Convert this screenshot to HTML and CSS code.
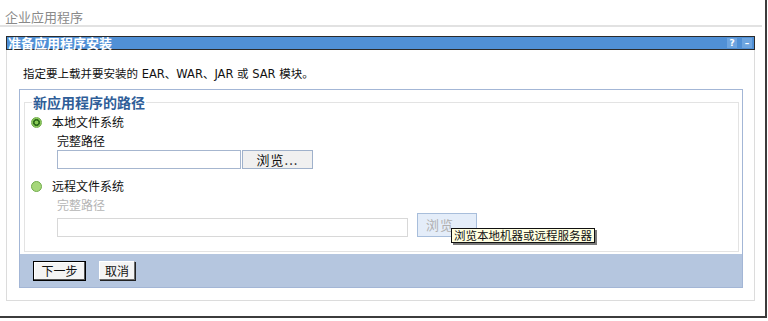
FILE: index.html
```html
<!DOCTYPE html>
<html>
<head>
<meta charset="utf-8">
<link rel="stylesheet" href="styles.css">
</head>
<body>
<div class="page">
  <div class="page-title">企业应用程序</div>
  <div class="frame">
    <div class="titlebar">
      <span class="titlebar-text">准备应用程序安装</span>
      <span class="tools"><span class="tool">?</span><span class="tool">–</span></span>
    </div>
    <p class="desc">指定要上载并要安装的 EAR、WAR、JAR 或 SAR 模块。</p>
    <div class="panel">
      <fieldset class="group">
        <legend>新应用程序的路径</legend>
        <div class="radio-row"><span class="radio checked"></span>本地文件系统</div>
        <div class="field-label">完整路径</div>
        <div class="field-row"><span class="input"></span><span class="btn browse">浏览...</span></div>
        <div class="radio-row second"><span class="radio"></span>远程文件系统</div>
        <div class="field-label disabled">完整路径</div>
        <div class="field-row remote"><span class="input wide"></span><span class="btn browse off">浏览...<span class="tooltip">浏览本地机器或远程服务器</span></span></div>
      </fieldset>
      <div class="buttonbar"><span class="btn action default">下一步</span><span class="btn action">取消</span></div>
    </div>
  </div>
</div>
</body>
</html>
```

FILE: styles.css
```css
html, body {
  margin: 0;
  padding: 0;
  background: #fff;
}
body {
  font-family: "Noto Sans CJK SC", "DejaVu Sans", sans-serif;
  font-size: 12px;
  color: #111;
  width: 768px;
  height: 321px;
  overflow: hidden;
}
.page {
  width: 765px;
  height: 316px;
  border-right: 2px solid #3c3c3c;
  border-bottom: 2px solid #3c3c3c;
  display: flex;
  flex-direction: column;
}
.page-title {
  padding: 9px 0 0 5px;
  height: 16px;
  line-height: 16px;
  font-size: 13px;
  color: #8a8a8a;
  border-bottom: 2px solid #e2e2e2;
  margin-right: 3px;
}
.frame {
  margin: 9px 10px 0 6px;
  height: 264px;
  border: 1px solid #dcdcdc;
  border-top: none;
  display: flex;
  flex-direction: column;
}
.titlebar {
  height: 12px;
  border: 1px solid #2b2b2b;
  background: #5090d6;
  display: flex;
  align-items: center;
  justify-content: space-between;
  margin: 0 -1px;
}
.titlebar-text {
  color: #fff;
  font-weight: bold;
  font-size: 13px;
  line-height: 12px;
  padding-left: 1px;
}
.tools {
  display: flex;
  gap: 5px;
  padding-right: 2px;
}
.tool {
  width: 10px;
  height: 10px;
  background: #6ea5e0;
  color: #fff;
  font-family: "DejaVu Sans", sans-serif;
  font-weight: bold;
  font-size: 9px;
  line-height: 10px;
  text-align: center;
}
.desc {
  margin: 16px 0 7px 0;
  padding-left: 16px;
  line-height: 16px;
  font-family: "DejaVu Sans", "Noto Sans CJK SC", sans-serif;
  font-size: 11.5px;
}
.panel {
  margin: 0 11px 0 12px;
  border: 1px solid #a3b6d6;
  display: flex;
  flex-direction: column;
}
.group {
  margin: 4px 3px 2px 4px;
  padding: 0 0 14px 7px;
  border: 1px solid #e3e3e3;
}
.group legend {
  padding: 0 1px;
  font-size: 14px;
  font-weight: bold;
  line-height: 16px;
  color: #2f5e98;
}
.radio-row {
  display: flex;
  align-items: center;
  margin-top: 4px;
  margin-left: -1px;
  line-height: 16px;
}
.radio-row.second {
  margin-top: 9px;
}
.radio {
  width: 11px;
  height: 11px;
  border-radius: 50%;
  margin-right: 10px;
  box-sizing: border-box;
  border: 1px solid #72ad4c;
  background: #a6d77a;
}
.radio.checked {
  background: radial-gradient(circle, #8acb55 0 1.6px, #2f6f1c 2.2px 3.2px, #8cc95c 3.8px);
}
.field-label {
  margin-top: 3px;
  padding-left: 25px;
  line-height: 16px;
}
.field-label.disabled {
  color: #b5b5b5;
}
.field-row {
  display: flex;
  align-items: flex-end;
  margin-top: 1px;
  padding-left: 25px;
}
.field-row.remote {
  margin-top: 0;
  gap: 9px;
}
.input {
  width: 184px;
  height: 19px;
  box-sizing: border-box;
  border: 1px solid #a6b6cf;
  background: #fff;
}
.input.wide {
  width: 351px;
  border-color: #d8d8d8;
}
.btn {
  display: flex;
  align-items: center;
  justify-content: center;
  box-sizing: border-box;
  line-height: 14px;
}
.browse {
  width: 71px;
  height: 19px;
  margin-left: 1px;
  border: 1px solid #9fb1cb;
  background: #f0f0f0;
  font-size: 13px;
  letter-spacing: 1px;
}
.browse.off {
  width: 60px;
  height: 24px;
  margin-left: 0;
  border-color: #a8bedb;
  background: #e4edf9;
  color: #b0b0b0;
  justify-content: flex-start;
  padding-left: 8px;
  position: relative;
}
.tooltip {
  position: absolute;
  left: 33px;
  top: 14px;
  height: 15px;
  box-sizing: border-box;
  padding: 0 2px;
  border: 1px solid #111;
  background: #ffffe1;
  color: #111;
  font-size: 11.5px;
  line-height: 13px;
  letter-spacing: 0;
  white-space: nowrap;
  box-shadow: 2px 2px 0 #7a7a7a;
}
.buttonbar {
  height: 33px;
  background: #b5c6df;
  display: flex;
  align-items: center;
  gap: 13px;
  padding-left: 13px;
}
.action {
  height: 19px;
  padding: 0 5px;
  background: #f4f4f4;
  border: 1px solid;
  border-color: #fff #6a6a6a #6a6a6a #fff;
  box-shadow: 1px 1px 0 #222;
  font-size: 12px;
}
.action.default {
  width: 53px;
  height: 20px;
  border: 1px solid #000;
  box-shadow: inset -1px -1px 0 #555, inset 1px 1px 0 #fff;
  margin-top: 1px;
}
```
